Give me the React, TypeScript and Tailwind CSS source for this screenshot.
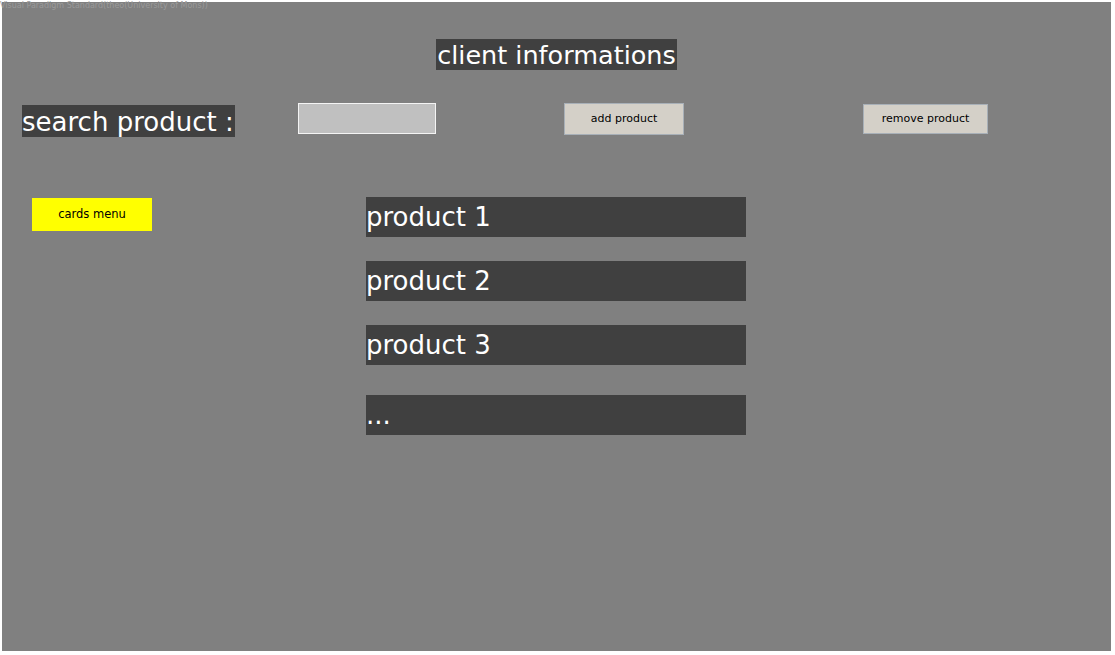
import React from "react";

const font = { fontFamily: '"DejaVu Sans", "Liberation Sans", sans-serif' };

export default function App() {
  const products = ["product 1", "product 2", "product 3"];
  return (
    <div className="w-[1115px] h-[655px] bg-white p-[2px]" style={font}>
      <div className="relative w-[1109px] h-[649px] bg-[#808080] flex flex-col">
        <div className="absolute left-[-2px] top-[-2px] text-[8px] leading-[12px] text-[#9a9a9a] whitespace-nowrap">
          Visual Paradigm Standard(theo(University of Mons))
        </div>
        <div className="flex justify-center mt-[37px]">
          <div className="h-[31px] w-[241px] bg-[#404040] text-white text-[25.5px] leading-[33px] text-center whitespace-nowrap overflow-hidden">
            client informations
          </div>
        </div>
        <div className="flex items-start mt-[33px] pl-[20px]">
          <div className="mt-[2px] h-[32px] w-[213px] bg-[#404040] text-white text-[26px] leading-[34px] whitespace-nowrap overflow-hidden">
            search product :
          </div>
          <div className="ml-[63px] h-[31px] w-[138px] bg-[#c0c0c0] border border-[#f4f4f4]" />
          <div className="ml-[128px] h-[32px] w-[120px] pt-[1px] bg-[#d4d0c8] border border-[#a8b0b8] text-black text-[11px] flex items-center justify-center">
            add product
          </div>
          <div className="ml-[179px] mt-[1px] h-[30px] w-[125px] pt-[1px] bg-[#d4d0c8] border border-[#a8b0b8] text-black text-[11px] flex items-center justify-center">
            remove product
          </div>
        </div>
        <div className="flex items-start mt-[60px] pl-[30px]">
          <div className="mt-[1px] h-[33px] w-[120px] bg-[#ffff00] text-black text-[11.5px] flex items-center justify-center">
            cards menu
          </div>
          <div className="ml-[214px] w-[380px] flex flex-col gap-[24px]">
            {products.map((p) => (
              <div key={p} className="h-[40px] bg-[#404040] text-white text-[26px] leading-[40px] whitespace-nowrap">
                {p}
              </div>
            ))}
            <div className="mt-[6px] h-[40px] bg-[#404040] text-white text-[26px] leading-[40px]">
              ...
            </div>
          </div>
        </div>
      </div>
    </div>
  );
}
